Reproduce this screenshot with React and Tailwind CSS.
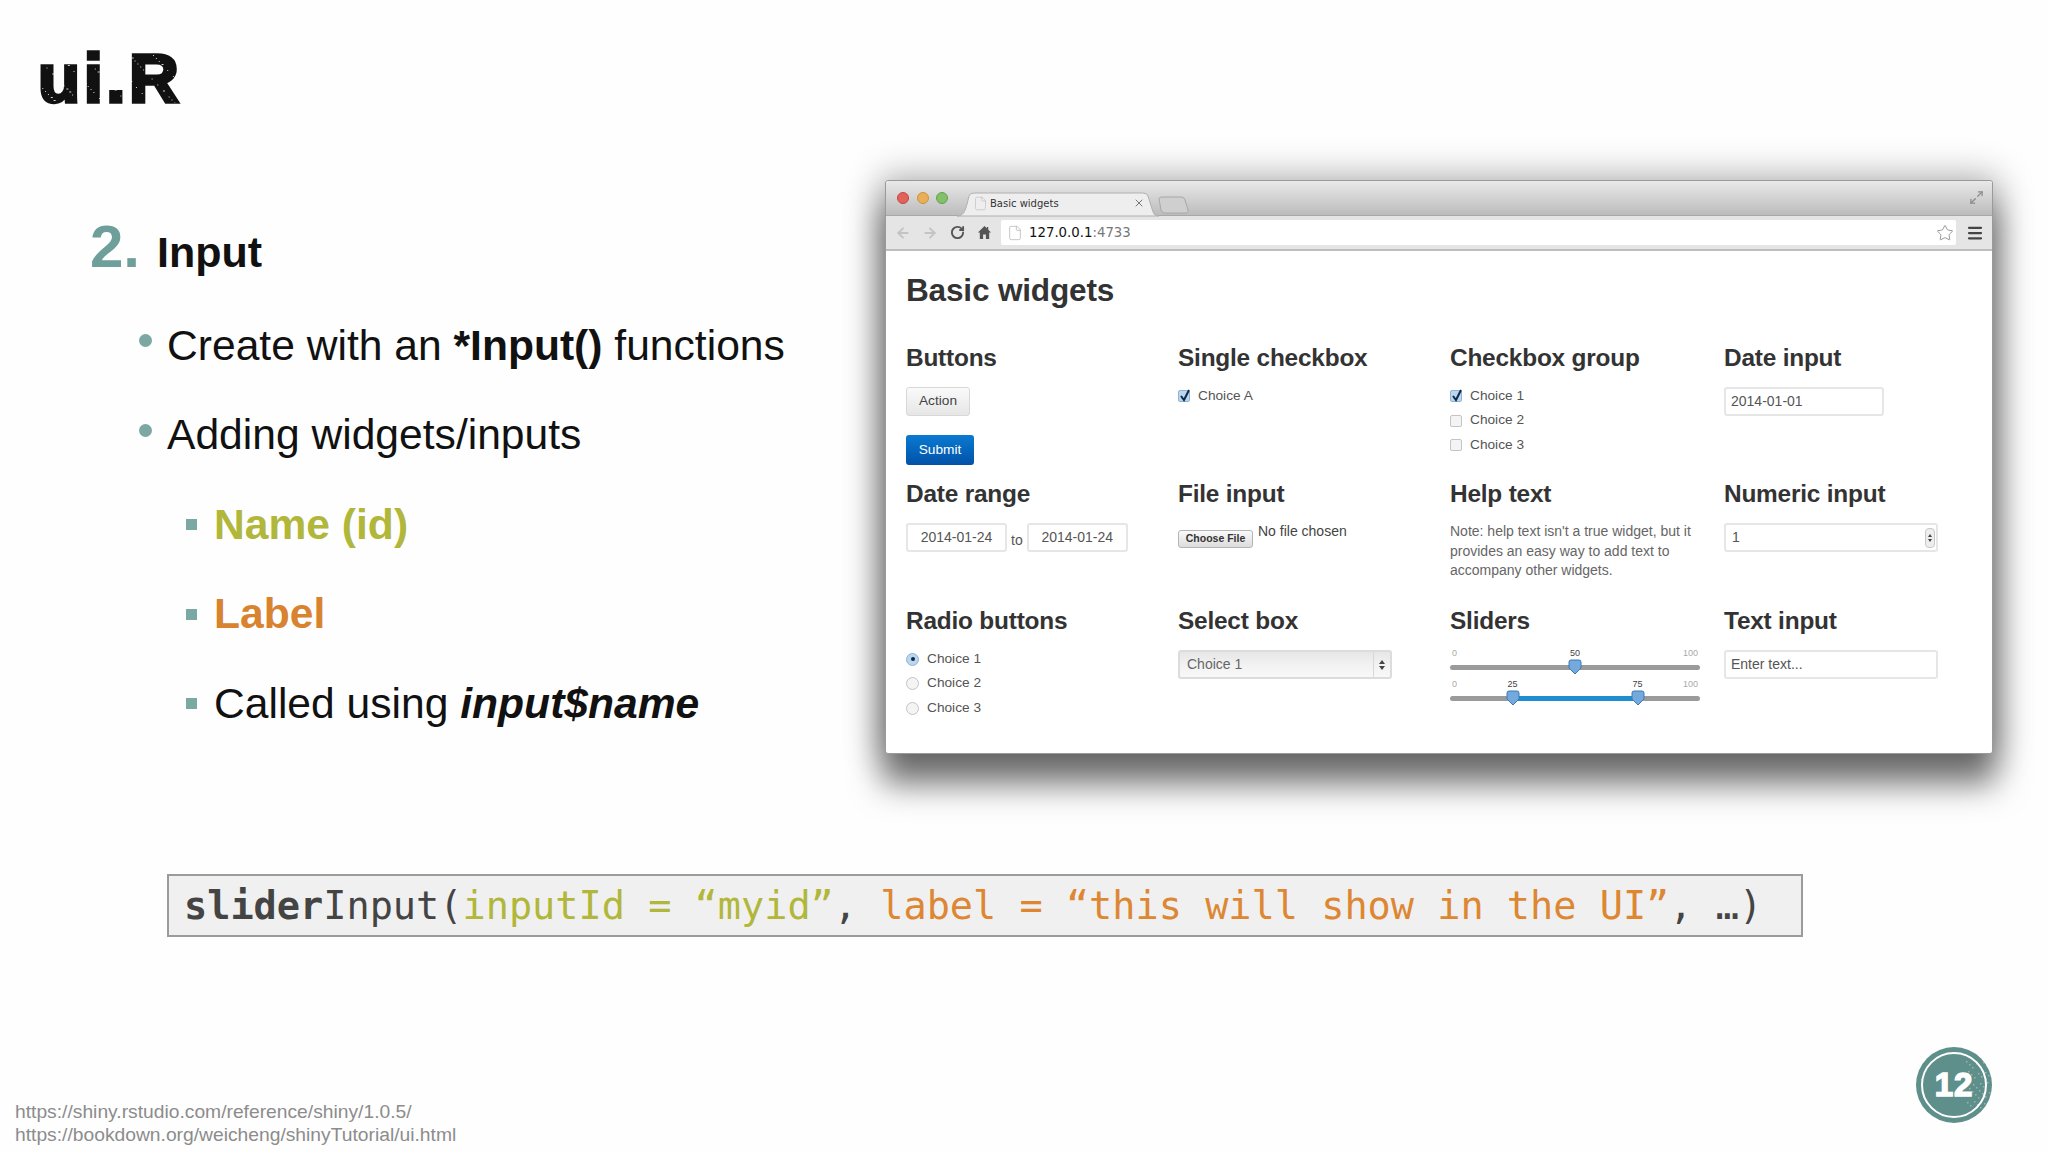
import React from "react";
import { ArrowLeft, ArrowRight, RotateCw, Star, Menu, File, X, Maximize2 } from "lucide-react";

function Specks() {
  const dots = [];
  for (let i = 0; i < 70; i++) {
    const x = (i * 37) % 100;
    const y = (i * 61 + 11) % 100;
    dots.push(<rect key={i} x={x * 1.42} y={y * 0.5} width={i % 3 === 0 ? 2 : 1} height={1} fill="#ffffff" opacity="0.8" />);
  }
  return (
    <svg className="absolute left-0 top-0" width="142" height="50" viewBox="0 0 142 50" aria-hidden="true">
      {dots}
    </svg>
  );
}

function BadgeSpecks() {
  const dots = [];
  for (let i = 0; i < 40; i++) {
    const x = 50 + (i * 13) % 24;
    const y = 14 + (i * 29) % 48;
    dots.push(<rect key={i} x={x} y={y} width="1.5" height="1.5" fill="#ffffff" opacity="0.35" />);
  }
  return (
    <svg className="absolute left-0 top-0" width="76" height="76" viewBox="0 0 76 76" aria-hidden="true">
      {dots}
    </svg>
  );
}

function Check({ on }) {
  return (
    <span className={"relative inline-block w-[12px] h-[12px] rounded-[2px] border " + (on ? "border-[#8fb4d8] bg-[#bcd6ee]" : "border-[#c4c4c4] bg-[#f4f4f4]")}>
      {on && (
        <svg className="absolute -left-[1px] -top-[3px]" width="14" height="15" viewBox="0 0 14 15" aria-hidden="true">
          <path d="M3 8l3 4 5-10" fill="none" stroke="#10284a" strokeWidth="2" />
        </svg>
      )}
    </span>
  );
}

function Radio({ on }) {
  return (
    <span className={"flex items-center justify-center w-[13px] h-[13px] rounded-full border " + (on ? "border-[#8fb4d8] bg-[#bcd6ee]" : "border-[#c4c4c4] bg-[#f4f4f4]")}>
      {on && <span className="w-[4px] h-[4px] rounded-full bg-[#10284a]" />}
    </span>
  );
}

function Row({ children, control }) {
  return (
    <div className="flex items-center gap-[8px] h-[24.5px] text-[13.7px] text-[#555]">
      {control}
      <span>{children}</span>
    </div>
  );
}

function H({ children }) {
  return <h3 className="h-[28px] leading-[28px] text-[24.4px] font-bold text-[#333] -tracking-[0.2px]">{children}</h3>;
}

function Field({ className, children }) {
  return (
    <div className={"h-[29px] rounded-[3px] border-2 border-[#e6e6e6] bg-white text-[14px] text-[#555] flex items-center " + className}>
      {children}
    </div>
  );
}

function Handle({ at }) {
  return (
    <svg className="absolute -top-[6px] -ml-[7px]" style={{ left: at + "px" }} width="14" height="16" viewBox="0 0 14 16" aria-hidden="true">
      <path d="M1 3 Q1 1 3 1 H11 Q13 1 13 3 V9 L7 15 L1 9 Z" fill="#74a9dd" stroke="#3f78b5" strokeWidth="1" />
    </svg>
  );
}

function Slider({ labels, range, handles }) {
  return (
    <div className="w-[250px]">
      <div className="relative h-[14px] text-[9px] text-[#aaa] leading-[14px]">
        <span className="absolute left-[2px]">0</span>
        {labels.map((l) => (
          <span key={l} className="absolute -ml-[5px] text-[#444]" style={{ left: (l * 2.5) + "px" }}>{l}</span>
        ))}
        <span className="absolute right-[2px]">100</span>
      </div>
      <div className="relative h-[5px] mt-[5px] rounded-full bg-[#9b9b9b]">
        {range && <div className="absolute top-0 h-[5px] bg-[#1d8fd0]" style={{ left: range[0] * 2.5 + "px", width: (range[1] - range[0]) * 2.5 + "px" }} />}
        {handles.map((h) => <Handle key={h} at={h * 2.5} />)}
      </div>
    </div>
  );
}

function Browser() {
  return (
    <div className="w-[1108px] h-[574px] flex flex-col bg-white rounded-[3px] border border-[#9a9a9a] shadow-[0_28px_32px_3px_rgba(0,0,0,0.5),0_0_34px_6px_rgba(0,0,0,0.28)] overflow-visible">
      <div className="relative h-[35px] shrink-0 rounded-t-[3px] bg-gradient-to-b from-[#e9e9e9] to-[#bcbcbc] border-b border-[#a8a8a8] flex items-center pl-[11px] gap-[7.5px]">
        <span className="w-[12px] h-[12px] rounded-full bg-[#e2635b] border border-[#c9443d]" />
        <span className="w-[12px] h-[12px] rounded-full bg-[#e8ae5a] border border-[#d09235]" />
        <span className="w-[12px] h-[12px] rounded-full bg-[#84bf6c] border border-[#5fa548]" />
        <svg className="absolute left-[71px] top-[11px]" width="240" height="25" viewBox="0 0 240 25" aria-hidden="true">
          <path d="M0 24 C6 24 8 20 10 12 L12 4 Q13 1 17 1 H186 Q190 1 191 4 L196 20 Q197 24 202 24 Z" fill="#eeeeee" stroke="#b0b0b0" />
          <path d="M202 7 Q202 5 205 5 H224 Q227 5 228 8 L231 18 Q232 21 228 21 H208 Q205 21 204 18 Z" fill="#cfcfcf" stroke="#a8a8a8" />
        </svg>
        <File className="absolute left-[87px] top-[15px] text-[#bbb]" size={15} strokeWidth={1} />
        <span className="absolute left-[104px] top-[16px] text-[10px] leading-[14px] text-[#333] font-['DejaVu_Sans',sans-serif]">Basic widgets</span>
        <X className="absolute left-[247px] top-[16px] text-[#555]" size={12} strokeWidth={1.6} />
        <Maximize2 className="absolute right-[8px] top-[9px] text-[#8a8a8a]" size={15} strokeWidth={2} />
      </div>
      <div className="h-[35px] shrink-0 bg-[#e5e5e5] border-b-2 border-[#bdbdbd] flex items-center pl-[9px] pr-[8px]">
        <ArrowLeft size={16} strokeWidth={2.8} className="text-[#c4c4c4]" />
        <ArrowRight size={16} strokeWidth={2.8} className="ml-[11px] text-[#c4c4c4]" />
        <RotateCw size={15} strokeWidth={3} className="ml-[12px] text-[#555]" />
        <svg className="ml-[12px] text-[#555]" width="15" height="15" viewBox="0 0 16 16" aria-hidden="true">
          <path d="M8 1 L1 8 H3 V15 H6.5 V10 H9.5 V15 H13 V8 H15 L12 5 V2 H10.5 V3.5 Z" fill="currentColor" />
        </svg>
        <div className="ml-[9px] h-[25px] flex-1 bg-white flex items-center pl-[6px] pr-[2px] rounded-[2px]">
          <File size={16} strokeWidth={1} className="text-[#aaa]" />
          <span className="ml-[6px] text-[13.3px] text-[#111] font-['DejaVu_Sans',sans-serif]">127.0.0.1<span className="text-[#777]">:4733</span></span>
          <Star size={18} strokeWidth={1} className="ml-auto text-[#777]" />
        </div>
        <Menu size={18} strokeWidth={3} className="ml-[10px] text-[#444]" />
      </div>
      <div className="flex-1 pl-[20px] pt-[22px]">
        <h1 className="h-[34px] leading-[34px] text-[31.6px] font-bold text-[#333] -tracking-[0.2px]">Basic widgets</h1>
        <div className="mt-[37px] grid grid-cols-[272px_272px_274px_1fr] grid-rows-[136px_127px_auto]">
          <div>
            <H>Buttons</H>
            <div className="mt-[15px] w-[64px] h-[29px] flex items-center justify-center rounded-[3px] border border-[#d8d8d8] bg-gradient-to-b from-[#fafafa] to-[#e6e6e6] text-[13.7px] text-[#444]">Action</div>
            <div className="mt-[19px] w-[68px] h-[30px] flex items-center justify-center rounded-[3px] bg-gradient-to-b from-[#0b7ad1] to-[#0352a8] text-[13.7px] text-white">Submit</div>
          </div>
          <div>
            <H>Single checkbox</H>
            <div className="mt-[12px]"><Row control={<Check on />}>Choice A</Row></div>
          </div>
          <div>
            <H>Checkbox group</H>
            <div className="mt-[12px]">
              <Row control={<Check on />}>Choice 1</Row>
              <Row control={<Check />}>Choice 2</Row>
              <Row control={<Check />}>Choice 3</Row>
            </div>
          </div>
          <div>
            <H>Date input</H>
            <Field className="mt-[15px] w-[160px] pl-[5px]">2014-01-01</Field>
          </div>

          <div>
            <H>Date range</H>
            <div className="mt-[15px] flex items-center">
              <Field className="w-[101px] justify-center">2014-01-24</Field>
              <span className="mx-[4px] mt-[5px] text-[14px] text-[#555]">to</span>
              <Field className="w-[101px] justify-center">2014-01-24</Field>
            </div>
          </div>
          <div>
            <H>File input</H>
            <div className="mt-[14px] flex items-start">
              <div className="mt-[8px] w-[75px] h-[18px] flex items-center justify-center rounded-[3px] border border-[#b5b5b5] bg-gradient-to-b from-[#fafafa] to-[#dcdcdc] text-[10.5px] font-bold text-[#333]">Choose File</div>
              <span className="ml-[5px] text-[14px] leading-[18px] text-[#444]">No file chosen</span>
            </div>
          </div>
          <div>
            <H>Help text</H>
            <p className="mt-[14px] w-[250px] text-[14px] leading-[19.5px] text-[#666]">Note: help text isn't a true widget, but it provides an easy way to add text to accompany other widgets.</p>
          </div>
          <div>
            <H>Numeric input</H>
            <Field className="mt-[15px] w-[214px] pl-[6px] pr-[1px] justify-between">
              <span>1</span>
              <span className="w-[10px] h-[20px] flex flex-col items-center justify-center gap-[2px] rounded-[4px] border border-[#c8c8c8] bg-[#eee]">
                <span className="w-0 h-0 border-x-[2.5px] border-x-transparent border-b-[3px] border-b-[#444]" />
                <span className="w-0 h-0 border-x-[2.5px] border-x-transparent border-t-[3px] border-t-[#444]" />
              </span>
            </Field>
          </div>

          <div>
            <H>Radio buttons</H>
            <div className="mt-[12px]">
              <Row control={<Radio on />}>Choice 1</Row>
              <Row control={<Radio />}>Choice 2</Row>
              <Row control={<Radio />}>Choice 3</Row>
            </div>
          </div>
          <div>
            <H>Select box</H>
            <div className="mt-[15px] w-[214px] h-[29px] flex items-center rounded-[3px] border-2 border-[#dcdcdc] bg-gradient-to-b from-[#e6e6e6] via-[#f2f2f2] to-[#f8f8f8] text-[14px] text-[#666]">
              <span className="flex-1 pl-[7px]">Choice 1</span>
              <span className="w-[17px] h-full flex flex-col items-center justify-center gap-[2px] border-l border-[#d8d8d8]">
                <span className="w-0 h-0 border-x-[3px] border-x-transparent border-b-[4px] border-b-[#444]" />
                <span className="w-0 h-0 border-x-[3px] border-x-transparent border-t-[4px] border-t-[#444]" />
              </span>
            </div>
          </div>
          <div>
            <H>Sliders</H>
            <div className="mt-[11px]"><Slider labels={[50]} handles={[50]} /></div>
            <div className="mt-[7px]"><Slider labels={[25, 75]} range={[25, 75]} handles={[25, 75]} /></div>
          </div>
          <div>
            <H>Text input</H>
            <Field className="mt-[15px] w-[214px] pl-[5px]">Enter text...</Field>
          </div>
        </div>
      </div>
    </div>
  );
}

function Bullet({ children }) {
  return (
    <div className="h-[89.5px] pl-[49px] flex items-center relative">
      <span className="absolute left-[49px] top-[34px] w-[13px] h-[13px] rounded-full bg-[#7ba8a3]" />
      <span className="ml-[28px] text-[42.6px] leading-[50px] text-[#111] whitespace-nowrap">{children}</span>
    </div>
  );
}

function Sub({ children }) {
  return (
    <div className="h-[89.5px] pl-[96px] flex items-center relative">
      <span className="mt-[2px] w-[11px] h-[11px] bg-[#7ba8a3]" />
      <span className="ml-[17px] text-[42.6px] leading-[50px] whitespace-nowrap">{children}</span>
    </div>
  );
}

export default function App() {
  return (
    <div className="w-[2048px] h-[1152px] overflow-hidden bg-[#fefefe] flex flex-col font-['Liberation_Sans',Arial,sans-serif]">
      <header className="h-[180px] shrink-0 pl-[38px] pt-[53px]">
        <div className="relative w-[146px] h-[52px]">
          <span className="block text-[69px] leading-[52px] font-bold text-[#111] [-webkit-text-stroke:3.5px_#111] tracking-[3.5px]">ui.R</span>
          <Specks />
        </div>
      </header>
      <main className="h-[574px] shrink-0 flex">
        <div className="w-[885px] shrink-0 pl-[90px]">
          <div className="flex items-baseline h-[120px] pt-[32px]">
            <span className="text-[60px] leading-[70px] font-bold text-[#6f9f9a]">2.</span>
            <span className="ml-[17px] text-[43px] leading-[50px] font-bold text-[#111]">Input</span>
          </div>
          <Bullet>Create with an <b>*Input()</b> functions</Bullet>
          <Bullet>Adding widgets/inputs</Bullet>
          <Sub><b className="text-[#b0b73a]">Name (id)</b></Sub>
          <Sub><b className="text-[#d8832f]">Label</b></Sub>
          <Sub><span className="text-[#111]">Called using <b><i>input$name</i></b></span></Sub>
        </div>
        <Browser />
      </main>
      <div className="mt-[120px] ml-[167px] w-[1636px] h-[63px] shrink-0 flex items-center pl-[15px] bg-[#f0f0f0] border-2 border-[#9b9b9b] font-['DejaVu_Sans_Mono',monospace] text-[38.55px] text-[#444] whitespace-pre">
        <span><b>slider</b>Input(<span className="text-[#b0b73a]">inputId = “myid”</span>, <span className="text-[#dd8733]">label = “this will show in the UI”</span>, …)</span>
      </div>
      <footer className="flex-1 flex items-end justify-between">
        <div className="pl-[15px] pb-[6px] text-[19.25px] leading-[23px] text-[#8c8c8c]">
          <div>https://shiny.rstudio.com/reference/shiny/1.0.5/</div>
          <div>https://bookdown.org/weicheng/shinyTutorial/ui.html</div>
        </div>
        <div className="relative mr-[56px] mb-[29px] w-[76px] h-[76px] rounded-full bg-[#5f8f8a] flex items-center justify-center">
          <BadgeSpecks />
          <div className="relative w-[66px] h-[66px] rounded-full border-2 border-white flex items-center justify-center text-[33px] font-bold text-white [-webkit-text-stroke:1.5px_#fff] tracking-[1px]">12</div>
        </div>
      </footer>
    </div>
  );
}
